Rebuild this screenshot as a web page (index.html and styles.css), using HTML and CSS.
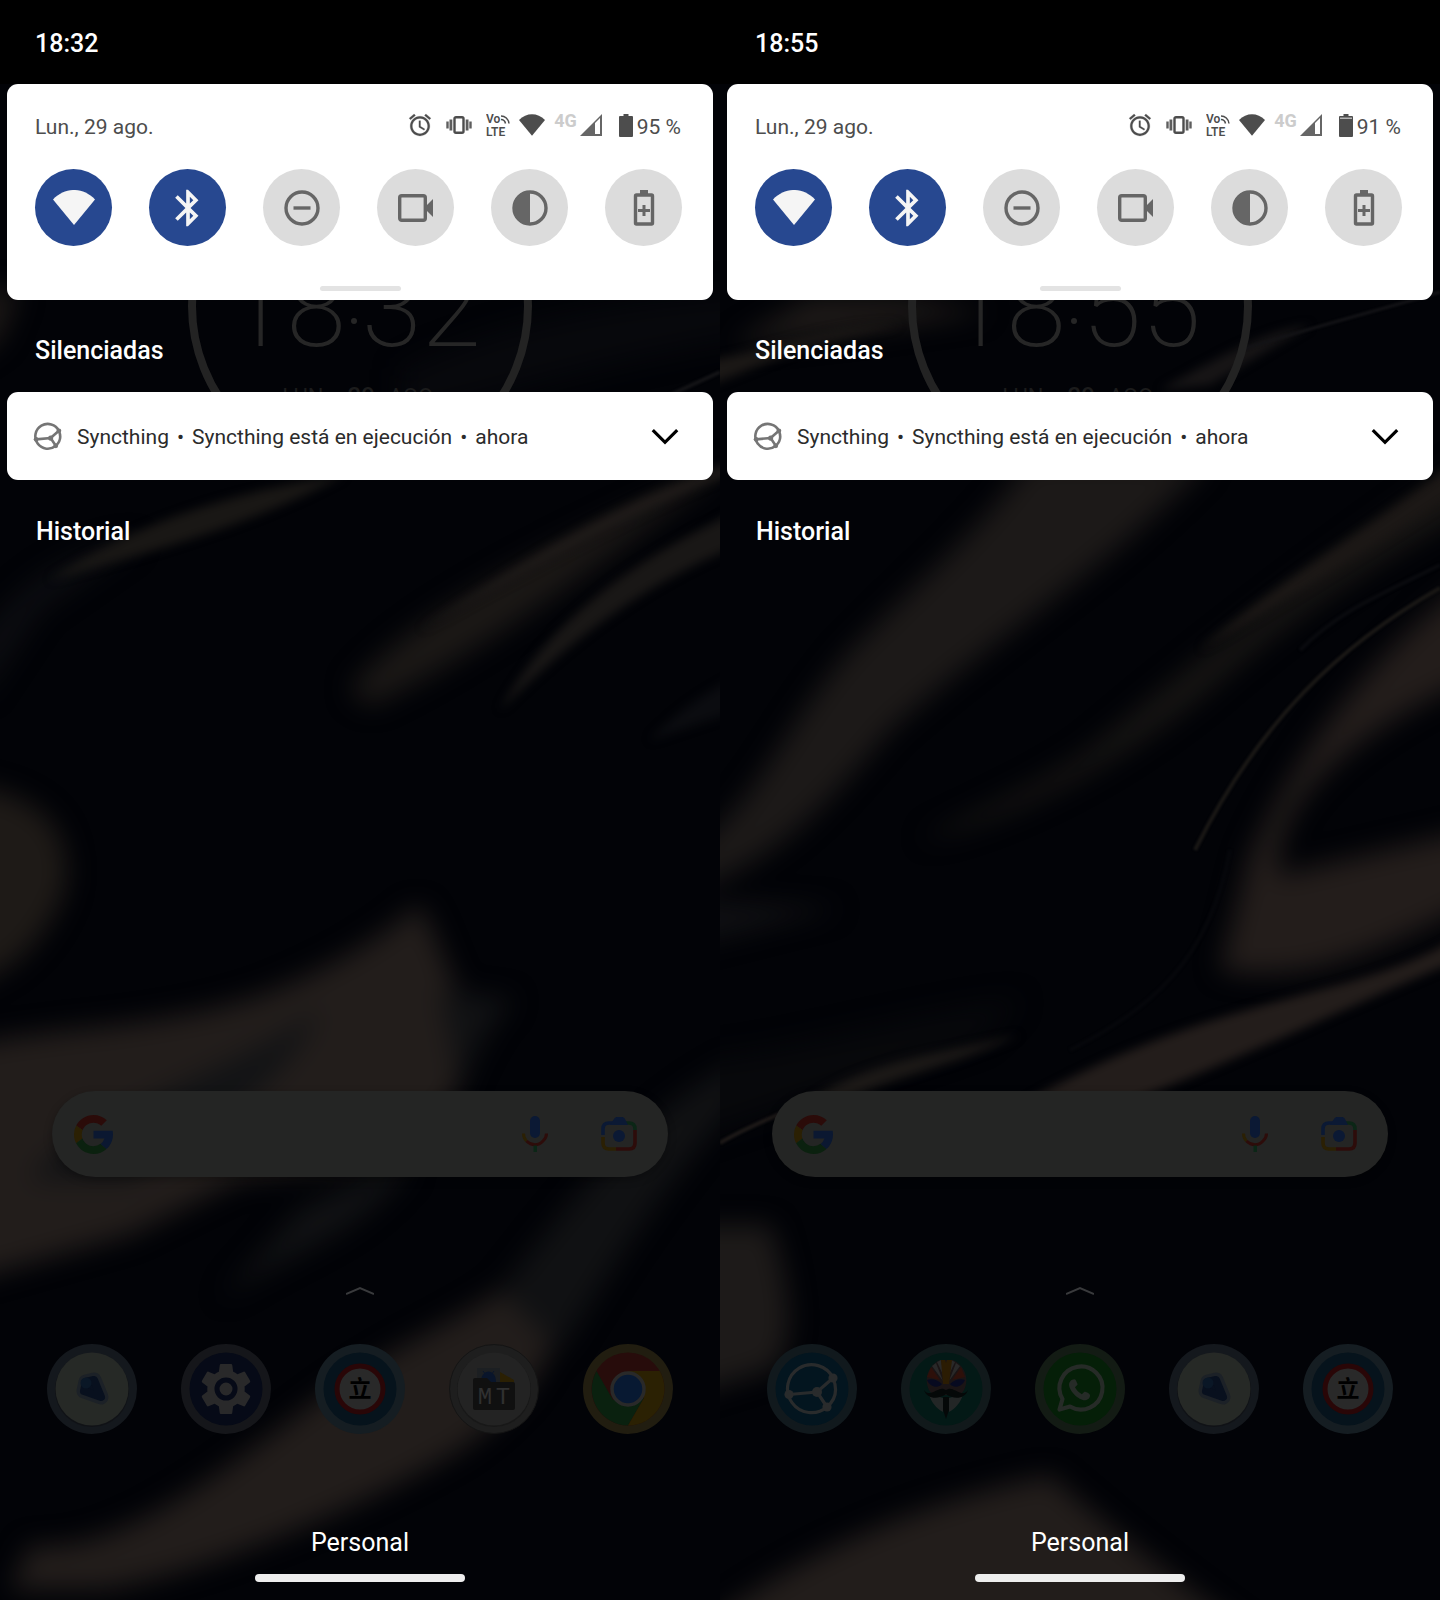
FILE: index.html
```html
<!DOCTYPE html>
<html lang="es">
<head>
<meta charset="utf-8">
<meta name="viewport" content="width=device-width, initial-scale=1">
<title>Notificaciones</title>
<link rel="stylesheet" href="styles.css">
</head>
<body>
<svg class="sprite" aria-hidden="true">
  <defs>
    <symbol id="alarm" viewBox="1 1 22 22"><path stroke="currentColor" stroke-width=".2" d="M22 5.720l-4.600-3.860-1.290 1.530 4.600 3.860L22 5.720zM7.880 3.390L6.600 1.860 2 5.710l1.290 1.530 4.590-3.850zM12.500 8H11v6l4.750 2.850.75-1.230-4-2.370V8zM12 4c-4.970 0-9 4.030-9 9s4.020 9 9 9 9-4.030 9-9-4.030-9-9-9zm0 16c-3.870 0-7-3.130-7-7s3.130-7 7-7 7 3.130 7 7-3.130 7-7 7z"/></symbol>
    <symbol id="vibrate" viewBox="0 0 26 22"><rect x="8.500" y="3.200" width="9" height="15.600" rx="1.500" fill="none" stroke="currentColor" stroke-width="2.400"/><path d="M3.500 5.500h2.800v11H3.500zM19.700 5.500h2.800v11h-2.800zM.3 7.500h2.400v7H.3zM23.300 7.500h2.400v7h-2.400z" opacity=".9"/></symbol>
    <symbol id="volte" viewBox="0 0 24 24"><text x="0" y="10" class="volte-text">Vo</text><text x="0" y="23" class="volte-text">LTE</text><path d="M15 3c4 0 7.500 3 8 7.500M15 6.500c2 0 4 1.500 4.500 4" fill="none" stroke="currentColor" stroke-width="1.500"/></symbol>
    <symbol id="wifi" viewBox="0 0 42 35"><path d="M0 9.500C12-3.200 30-3.200 42 9.500L21 35z"/></symbol>
    <symbol id="signal" viewBox="0 0 22 22"><path fill-rule="evenodd" d="M0 22L22 0v22zM15 9v11h5V4z"/></symbol>
    <symbol id="battery" viewBox="0 0 14 23"><path d="M4.500 0h5v2H13a1 1 0 0 1 1 1v19a1 1 0 0 1-1 1H1a1 1 0 0 1-1-1V3a1 1 0 0 1 1-1h3.500z"/></symbol>
    <symbol id="battery-low" viewBox="0 0 14 23"><path d="M4.500 0h5v2H13a1 1 0 0 1 1 1v19a1 1 0 0 1-1 1H1a1 1 0 0 1-1-1V3a1 1 0 0 1 1-1h3.500z"/><path fill="#b5b5b5" d="M1 3.500h12v1.500H1z"/></symbol>
    <symbol id="bluetooth" viewBox="0 0 24 24"><path d="M17.710 7.710L12 2h-1v7.590L6.410 5 5 6.410 10.590 12 5 17.590 6.410 19 11 14.410V22h1l5.710-5.710-4.300-4.290 4.300-4.290zM13 5.830l1.880 1.880L13 9.590V5.830zm1.880 10.460L13 18.170v-3.760l1.880 1.880z"/></symbol>
    <symbol id="dnd" viewBox="0 0 44 44"><circle cx="22" cy="22" r="16" fill="none" stroke="currentColor" stroke-width="3.400"/><path d="M13.500 20.300h17v3.400h-17z"/></symbol>
    <symbol id="camera" viewBox="0 0 44 44"><rect x="5.700" y="9.700" width="25.600" height="24.600" rx="2" fill="none" stroke="currentColor" stroke-width="3.400"/><path d="M30 22l9-9v18z"/></symbol>
    <symbol id="contrast" viewBox="0 0 44 44"><circle cx="22" cy="22" r="16" fill="none" stroke="currentColor" stroke-width="3.400"/><path d="M22 5v34A17 17 0 0 1 22 5z"/></symbol>
    <symbol id="saver" viewBox="0 0 44 44"><path d="M18 4h8v4h-8z"/><rect x="13.500" y="9" width="17" height="29" rx="1" fill="none" stroke="currentColor" stroke-width="3.400"/><path d="M20.500 19h3v4H28v3h-4.500v4h-3v-4H16v-3h4.500z"/></symbol>
    <symbol id="syncthing" viewBox="17 17 54 56"><g fill="none" stroke="currentColor"><path d="M66 34A24 24 0 1 0 60 63C68 56 71 46 66 34z"/><path d="M22 50.500L50 48l16-14M50 48l10 15"/></g><circle cx="22" cy="50.500" r="4.600"/><circle cx="50" cy="48" r="5"/><circle cx="66" cy="34" r="4.600"/><circle cx="60" cy="63" r="4.600"/></symbol>
    <symbol id="google" viewBox="4 4 40 40">
      <path fill="#2b0b09" d="M6.306 14.691l6.571 4.819C14.655 15.108 18.961 12 24 12c3.059 0 5.842 1.154 7.961 3.039l5.657-5.657C34.046 6.053 29.268 4 24 4 16.318 4 9.656 8.337 6.306 14.691z"/>
      <path fill="#2b2003" d="M6.306 14.691A19.900 19.900 0 0 0 4 24c0 3.220.76 6.260 2.200 9l6.400-5A12 12 0 0 1 12.877 19.510z"/>
      <path fill="#0b210f" d="M24 44c5.166 0 9.860-1.977 13.409-5.192l-6.190-5.238A11.910 11.910 0 0 1 24 36c-5.202 0-9.619-3.317-11.283-7.946l-6.522 5.025C9.505 39.556 16.227 44 24 44z"/>
      <path fill="#0b1831" d="M43.611 20.083H24v8h11.303a12.040 12.040 0 0 1-4.087 5.571l6.190 5.238C36.971 39.205 44 34 44 24c0-1.341-.138-2.650-.389-3.917z"/>
    </symbol>
    <symbol id="mic" viewBox="0 0 26 36"><rect x="8" y="0" width="10" height="22" rx="5" fill="#0b1934"/><path d="M1.500 17.500c0 3 1 5.500 3 7.500" fill="none" stroke="#2b2003" stroke-width="3"/><path d="M4.500 25c5 5 12 5 16.500 0 2.200-2 3.500-4.500 3.500-7.500" fill="none" stroke="#2d0c0a" stroke-width="3"/><path d="M11.500 29.500h3.500V36h-3.500z" fill="#0b2616"/></symbol>
    <symbol id="lens" viewBox="0 0 36 34"><g fill="none" stroke-width="3.600"><path d="M2 18v-6c0-4 2-6 6-6h4" stroke="#0b1934"/><path d="M25 6h3c4 0 6 2 6 6v1" stroke="#0b2616"/><path d="M34 13v13c0 4-2 6-6 6H15" stroke="#2d0c0a"/><path d="M15 32H8c-4 0-6-2-6-6v-6" stroke="#2b2003"/></g><path d="M9 8l4-6c1-1.500 2-2 3-2h5c1 0 2 .5 3 2l3 6z" fill="#0b1934"/><circle cx="18" cy="19" r="6" fill="#0b1934"/></symbol>

    <symbol id="app-blob" viewBox="0 0 90 90"><circle cx="45" cy="45" r="45" fill="#14181d"/><circle cx="45" cy="46" r="37" fill="#101216"/><circle cx="45" cy="45" r="36.500" fill="#262926"/><path d="M39 38L47 36 54 53 37 47z" fill="#1c2127" stroke="#1c2127" stroke-width="15" stroke-linejoin="round"/><path d="M39 38L47 36 54 53 37 47z" fill="#08101e" stroke="#08101e" stroke-width="8" stroke-linejoin="round"/><circle cx="39" cy="39" r="5.500" fill="#0a1726"/></symbol>
    <symbol id="app-settings" viewBox="0 0 90 90"><circle cx="45" cy="45" r="45" fill="#15161a"/><circle cx="45" cy="45" r="36.500" fill="#060a17"/><path fill="#29292a" transform="translate(45 45) scale(2.600) translate(-12 -12)" d="M19.140 12.940c.04-.3.060-.61.060-.94 0-.32-.02-.64-.07-.94l2.030-1.580c.18-.14.230-.41.120-.61l-1.920-3.320c-.12-.22-.37-.29-.59-.22l-2.390.96c-.5-.38-1.030-.7-1.620-.94l-.36-2.540c-.04-.24-.24-.41-.48-.41h-3.840c-.24 0-.43.170-.47.410l-.36 2.540c-.59.240-1.130.570-1.620.940l-2.390-.96c-.22-.08-.47 0-.59.220L2.740 8.870c-.12.210-.08.470.12.610l2.030 1.580c-.05.3-.09.630-.09.940s.02.640.07.940l-2.030 1.580c-.18.140-.23.410-.12.610l1.920 3.320c.12.220.37.290.59.220l2.390-.96c.5.380 1.030.7 1.620.940l.36 2.540c.05.240.24.410.48.410h3.840c.24 0 .44-.17.470-.41l.36-2.540c.59-.24 1.130-.56 1.620-.94l2.390.96c.22.080.47 0 .59-.22l1.920-3.320c.12-.22.070-.47-.12-.61l-2.010-1.580z"/><circle cx="45" cy="45" r="9" fill="#29292a" stroke="#060a17" stroke-width="5"/></symbol>
    <symbol id="app-li" viewBox="0 0 90 90"><circle cx="45" cy="45" r="45" fill="#151d22"/><circle cx="45" cy="45" r="36.500" fill="#06131c"/><circle cx="45" cy="45" r="23" fill="#292929" stroke="#290607" stroke-width="5"/><text x="45" y="53" text-anchor="middle" class="li-text">立</text></symbol>
    <symbol id="app-mt" viewBox="0 0 90 90"><circle cx="45" cy="45" r="44.500" fill="#1e1e1e" stroke="#141414"/><circle cx="45" cy="46" r="37" fill="#181818"/><circle cx="45" cy="45" r="36.500" fill="#232323"/><path fill="#1c1f22" d="M28 24h23v15H28z"/><path fill="#2b2003" d="M51 28l14 8v5H51z"/><path d="M32 38c0-14 15-14 15 0z" fill="#09152b"/><path d="M34 27l3 4M45 27l-3 4" stroke="#09152b"/><path d="M24 36q0-2 2-2h12l4 4h22q2 0 2 2v24q0 2-2 2H26q-2 0-2-2z" fill="#101010"/><text x="36" y="60" text-anchor="middle" class="mt-text">M</text><text x="54" y="60" text-anchor="middle" class="mt-text">T</text></symbol>
    <symbol id="app-chrome" viewBox="0 0 90 90"><circle cx="45" cy="45" r="45" fill="#211d10"/><circle cx="45" cy="45" r="36.500" fill="#270c0b"/><path d="M13.500 27A36.500 36.500 0 0 0 45 81.500L61 54 30 56z" fill="#0a210f"/><path d="M45 27h31.700A36.500 36.500 0 0 1 45 81.500L61 54z" fill="#2b2103"/><circle cx="45" cy="45" r="16" fill="#081932" stroke="#292929" stroke-width="3.500"/></symbol>
    <symbol id="app-syncthing" viewBox="0 0 90 90"><circle cx="45" cy="45" r="45" fill="#11191d"/><circle cx="45" cy="45" r="36.500" fill="#03151f"/><svg x="17" y="17" width="54" height="56" color="#292b2c" fill="#292b2c" stroke-width="3.200"><use href="#syncthing"/></svg></symbol>
    <symbol id="app-mask" viewBox="0 0 90 90"><circle cx="45" cy="45" r="45" fill="#11191b"/><circle cx="45" cy="45" r="36.500" fill="#031916"/>
      <path d="M26 40c-2-10 4-20 13-24h13c9 4 15 14 13 24-1 5-3 9-7 11H33c-4-2-6-6-7-11z" fill="#1a1415"/>
      <path d="M31 22l4-3 7 18zM36 18l4-2 3 17zM59 22l-4-3-7 18zM54 18l-4-2-3 17z" fill="#292929"/>
      <path d="M26 33l4-10 9 13zM64 33l-4-10-9 13z" fill="#2d100a"/>
      <path d="M40 16h4l1 3 1-3h5l-3 24h-6z" fill="#2b1c03"/>
      <path d="M26 36c5-2 11 0 15 4-4 5-12 3-15-4zM64 36c-5-2-11 0-15 4 4 5 12 3 15-4z" fill="#070a20"/>
      <path d="M28 50l14 4v14C35 64 30 58 28 50zM62 50l-14 4v14c7-4 12-10 14-18z" fill="#232626"/>
      <path d="M23 46c5 7 11 0 17-1 3-1 4 1 5 1s2-2 5-1c6 1 12 8 17 1-3 9-14 10-22 4-8 6-19 5-22-4zM42 53h6v13l-3 9-3-9z" fill="#050808"/></symbol>
    <symbol id="app-whatsapp" viewBox="0 0 90 90"><circle cx="45" cy="45" r="45" fill="#131b14"/><circle cx="45" cy="45" r="36.500" fill="#051f08"/><path d="M24.500 65.500l3-10.500A21.500 21.500 0 1 1 35 62.500z" fill="none" stroke="#262b27" stroke-width="4.200" stroke-linejoin="round"/><path transform="translate(33 32) scale(1.050)" d="M6.620 10.790c1.440 2.830 3.760 5.140 6.590 6.590l2.200-2.200c.27-.27.670-.36 1.020-.24 1.120.370 4.570 1.570 4.570 3.570 0 3-3 4.490-5 4.490C10 23 1 14 1 8c0-2 2-5 5-5 1.500 0 2 2 3.070 4.570.11.350.03.740-.25 1.020z" fill="#262b27"/></symbol>

    <filter id="soft" x="-20%" y="-20%" width="140%" height="140%" color-interpolation-filters="sRGB"><feGaussianBlur stdDeviation="13"/></filter>
    <filter id="fine" x="-20%" y="-20%" width="140%" height="140%" color-interpolation-filters="sRGB"><feGaussianBlur stdDeviation="5"/></filter>
    <filter id="line" x="-20%" y="-20%" width="140%" height="140%" color-interpolation-filters="sRGB"><feGaussianBlur stdDeviation="1"/></filter>
  </defs>
</svg>

<main class="screens">
  <section class="phone" aria-label="Captura 18:32">
    <svg class="wallpaper" viewBox="0 0 720 1600" preserveAspectRatio="none" aria-hidden="true">
      <rect width="720" height="1600" fill="#020307"/>
      <g filter="url(#soft)">
        <path fill="#07080c" d="M400 370C500 320 620 300 740 290V340C620 360 520 390 400 420z"/>
        <path fill="#1c1816" d="M-30 290h50l-20 50-30 20z"/>
        <path fill="#1e1a17" d="M-30 785C40 795 75 830 65 890C50 930 20 970-30 985z"/>
        <path fill="#1b1816" d="M350 690C400 620 560 540 740 460C640 530 510 640 370 706z"/>
        <path fill="#0c0d11" d="M-20 640C30 570 80 550 140 540L40 610-20 700z"/>
        <path fill="#221d1b" d="M-30 1045C60 1025 150 1030 260 995C340 965 390 930 418 905C440 930 448 990 480 1020L455 1095 400 1160 240 1180 130 1235-30 1280z"/>
        <path fill="#121315" d="M30 1180C80 1110 220 1080 320 1010C290 1080 210 1130 130 1180z"/>
        <path fill="#111214" d="M460 1090C480 1040 500 1010 515 1000L440 990zM300 1210C360 1180 440 1150 400 1180 350 1240 290 1250 220 1300z"/>
        <path fill="#221d1b" d="M10 1590L30 1545C120 1555 230 1465 310 1405C390 1345 450 1325 500 1290L570 1250C570 1340 540 1395 460 1450C340 1520 180 1580 100 1590z"/>
        <path fill="#101113" d="M500 1290C580 1190 640 1110 740 1060V1100C650 1200 600 1290 560 1350z"/>
      </g>
      <g filter="url(#fine)">
        <path fill="#191715" d="M50 580C120 530 230 490 345 475C260 520 180 545 50 580z"/>
        <path fill="#1f1b19" d="M420 630C540 550 620 500 740 460V470C640 510 550 560 420 630z"/>
        <path fill="#191716" d="M740 510C630 560 550 620 500 710C570 640 650 580 740 545z"/>
        <path fill="#0b0c10" d="M740 675C690 700 670 720 650 740L740 710z"/>
      </g>
      <path filter="url(#line)" d="M670 395L720 372" stroke="#131316" stroke-width="4"/>
    </svg>
    <div class="clock" aria-hidden="true"><div class="clock-time"><span>18</span><i></i><span>32</span></div><div class="clock-date"><span>LUN.,</span><b>29</b><span>AGO.</span></div></div>

    <header class="status-bar"><time>18:32</time></header>
    <div class="panel">
      <div class="panel-head">
        <span>Lun., 29 ago.</span>
        <div class="status">
          <div class="status-left"><svg class="i24"><use href="#alarm"/></svg><svg class="i26"><use href="#vibrate"/></svg><svg class="i24"><use href="#volte"/></svg></div>
          <svg class="i26"><use href="#wifi"/></svg>
          <div class="mobile"><b>4G</b><svg class="i22"><use href="#signal"/></svg></div>
          <div class="charge"><svg class="ibat"><use href="#battery"/></svg><span>95 %</span></div>
        </div>
      </div>
      <div class="tiles">
        <button class="tile on" aria-label="Wi-Fi"><svg class="t-wifi"><use href="#wifi"/></svg></button>
        <button class="tile on" aria-label="Bluetooth"><svg><use href="#bluetooth"/></svg></button>
        <button class="tile" aria-label="No molestar"><svg><use href="#dnd"/></svg></button>
        <button class="tile" aria-label="Grabar pantalla"><svg><use href="#camera"/></svg></button>
        <button class="tile" aria-label="Tema oscuro"><svg><use href="#contrast"/></svg></button>
        <button class="tile" aria-label="Ahorro de batería"><svg><use href="#saver"/></svg></button>
      </div>
      <div class="handle"></div>
    </div>
    <h2 class="silent">Silenciadas</h2>
    <article class="notification">
      <svg class="n-icon"><use href="#syncthing"/></svg>
      <p><span>Syncthing</span><span>•</span><span>Syncthing está en ejecución</span><span>•</span><span>ahora</span></p>
      <button class="expand" aria-label="Expandir"><svg viewBox="0 0 26 16"><path d="M1.500 2L13 13.500 24.500 2"/></svg></button>
    </article>
    <h2 class="history">Historial</h2>

    <div class="home">
      <form class="search">
        <svg class="g-logo"><use href="#google"/></svg>
        <input type="search" aria-label="Buscar">
        <button type="button" aria-label="Búsqueda por voz"><svg class="g-mic"><use href="#mic"/></svg></button>
        <button type="button" aria-label="Google Lens"><svg class="g-lens"><use href="#lens"/></svg></button>
      </form>
      <svg class="caret" viewBox="0 0 28 10" aria-hidden="true"><path d="M0 8L14 2l14 6"/></svg>
      <nav class="dock" aria-label="Aplicaciones">
        <a href="#" aria-label="Mapa"><svg><use href="#app-blob"/></svg></a>
        <a href="#" aria-label="Ajustes"><svg><use href="#app-settings"/></svg></a>
        <a href="#" aria-label="Li"><svg><use href="#app-li"/></svg></a>
        <a href="#" aria-label="MT Manager"><svg><use href="#app-mt"/></svg></a>
        <a href="#" aria-label="Chrome"><svg><use href="#app-chrome"/></svg></a>
      </nav>
      <p class="carrier">Personal</p>
      <div class="nav-pill"></div>
    </div>
  </section>

  <section class="phone" aria-label="Captura 18:55">
    <svg class="wallpaper" viewBox="0 0 720 1600" preserveAspectRatio="none" aria-hidden="true">
      <rect width="720" height="1600" fill="#020307"/>
      <g filter="url(#soft)">
        <path fill="#1e1a18" d="M10 345L90 298H180L270 312 160 328z"/>
        <path fill="#1c1918" d="M310 460H490C400 560 270 640 170 730C110 800 60 860-30 890V850C40 800 60 730 130 650C200 580 260 530 310 460z"/>
        <path fill="#181614" d="M750 460C620 550 500 640 370 750C320 785 260 810 200 840C300 820 420 750 500 680C580 610 660 560 750 510z"/>
        <path fill="#231d1b" d="M750 580C640 660 560 780 528 860L500 970C580 985 650 955 750 905V830L560 875C550 800 640 730 750 680z"/>
        <path fill="#1d1a19" d="M-30 1225H50C70 1280 80 1350 50 1370L-30 1395z"/>
        <path fill="#221d1b" d="M-20 1630C80 1550 210 1500 330 1475C370 1510 440 1570 540 1640z"/>
        <path fill="#101013" d="M-30 900L120 908-30 945z"/>
        <path fill="#07080b" d="M-30 1060C80 1050 200 1010 300 1000L260 1040-30 1140z"/>
      </g>
      <g filter="url(#fine)">
        <path fill="#1b1816" d="M-10 360C50 350 120 320 180 325L90 345-10 385z"/>
        <path fill="#171516" d="M440 390C510 350 550 330 590 325L490 385z"/>
        <path fill="#1c1816" d="M740 460C640 535 560 580 480 650C570 600 650 550 740 490z"/>
        <path fill="#231d1b" d="M740 935C640 1000 500 990 300 1105H400C520 1060 640 1000 740 960z"/>
        <path fill="#1c1917" d="M90 1100C150 1060 210 1055 300 1035 220 1070 160 1080 120 1103z"/>
      </g>
      <g filter="url(#line)" fill="none">
        <path d="M520 350C600 325 660 310 720 292" stroke="#131316" stroke-width="3"/>
        <path d="M720 588C620 645 540 720 475 850" stroke="#191715" stroke-width="4"/>
        <path d="M720 565C660 595 620 610 580 650" stroke="#090a0e" stroke-width="4"/>
        <path d="M510 850C490 960 430 1010 350 1050" stroke="#06070b" stroke-width="4"/>
        <path d="M0 1143C30 1125 60 1115 90 1100" stroke="#1c1817" stroke-width="4"/>
      </g>
    </svg>
    <div class="clock" aria-hidden="true"><div class="clock-time"><span>18</span><i></i><span>55</span></div><div class="clock-date"><span>LUN.,</span><b>29</b><span>AGO.</span></div></div>

    <header class="status-bar"><time>18:55</time></header>
    <div class="panel">
      <div class="panel-head">
        <span>Lun., 29 ago.</span>
        <div class="status">
          <div class="status-left"><svg class="i24"><use href="#alarm"/></svg><svg class="i26"><use href="#vibrate"/></svg><svg class="i24"><use href="#volte"/></svg></div>
          <svg class="i26"><use href="#wifi"/></svg>
          <div class="mobile"><b>4G</b><svg class="i22"><use href="#signal"/></svg></div>
          <div class="charge"><svg class="ibat"><use href="#battery-low"/></svg><span>91 %</span></div>
        </div>
      </div>
      <div class="tiles">
        <button class="tile on" aria-label="Wi-Fi"><svg class="t-wifi"><use href="#wifi"/></svg></button>
        <button class="tile on" aria-label="Bluetooth"><svg><use href="#bluetooth"/></svg></button>
        <button class="tile" aria-label="No molestar"><svg><use href="#dnd"/></svg></button>
        <button class="tile" aria-label="Grabar pantalla"><svg><use href="#camera"/></svg></button>
        <button class="tile" aria-label="Tema oscuro"><svg><use href="#contrast"/></svg></button>
        <button class="tile" aria-label="Ahorro de batería"><svg><use href="#saver"/></svg></button>
      </div>
      <div class="handle"></div>
    </div>
    <h2 class="silent">Silenciadas</h2>
    <article class="notification">
      <svg class="n-icon"><use href="#syncthing"/></svg>
      <p><span>Syncthing</span><span>•</span><span>Syncthing está en ejecución</span><span>•</span><span>ahora</span></p>
      <button class="expand" aria-label="Expandir"><svg viewBox="0 0 26 16"><path d="M1.500 2L13 13.500 24.500 2"/></svg></button>
    </article>
    <h2 class="history">Historial</h2>

    <div class="home">
      <form class="search">
        <svg class="g-logo"><use href="#google"/></svg>
        <input type="search" aria-label="Buscar">
        <button type="button" aria-label="Búsqueda por voz"><svg class="g-mic"><use href="#mic"/></svg></button>
        <button type="button" aria-label="Google Lens"><svg class="g-lens"><use href="#lens"/></svg></button>
      </form>
      <svg class="caret" viewBox="0 0 28 10" aria-hidden="true"><path d="M0 8L14 2l14 6"/></svg>
      <nav class="dock" aria-label="Aplicaciones">
        <a href="#" aria-label="Syncthing"><svg><use href="#app-syncthing"/></svg></a>
        <a href="#" aria-label="Magisk"><svg><use href="#app-mask"/></svg></a>
        <a href="#" aria-label="WhatsApp"><svg><use href="#app-whatsapp"/></svg></a>
        <a href="#" aria-label="Mapa"><svg><use href="#app-blob"/></svg></a>
        <a href="#" aria-label="Li"><svg><use href="#app-li"/></svg></a>
      </nav>
      <p class="carrier">Personal</p>
      <div class="nav-pill"></div>
    </div>
  </section>
</main>
</body>
</html>
```

FILE: styles.css
```css
* { box-sizing: border-box; }
body { margin: 0; background: #000; font-family: Roboto, "Liberation Sans", sans-serif; color: #fff; }
h2, p { margin: 0; }
button { border: 0; padding: 0; background: none; color: inherit; font: inherit; cursor: pointer; }
svg { display: block; fill: currentColor; flex: none; }
.sprite { position: absolute; width: 0; height: 0; }

.screens { display: grid; grid-template-columns: 1fr 1fr; min-height: 100vh; }
.phone { position: relative; display: flex; flex-direction: column; isolation: isolate; overflow: hidden; }

/* Home screen behind the shade */
.wallpaper { position: absolute; inset: 0; z-index: -2; width: 100%; height: 100%; }
.clock {
  position: absolute; z-index: -1; top: 134px; left: 50%; margin-left: -172px;
  width: 344px; height: 344px; border: 8px solid #232323; border-radius: 50%;
  display: flex; flex-direction: column; align-items: center; padding-top: 99px;
  color: #262626;
}
.clock-time { display: flex; align-items: center; gap: 5px; font-size: 108px; line-height: 136px; font-weight: 200; padding-right: 12px; }
.clock-time i { width: 6px; height: 6px; margin-top: 24px; border-radius: 50%; background: #262626; }
.clock-date { display: flex; align-items: baseline; gap: 14px; font-size: 22px; line-height: 38px; color: #1c1c1c; }
.clock-date b { font-size: 24px; font-weight: 500; }

.status-bar { height: 84px; padding: 3px 35px 0; background: #000; display: flex; align-items: center; font-size: 25px; font-weight: 500; }

.panel { margin: 0 7px; padding: 0 28px 9px; background: #fff; border-radius: 11px; color: #4d4d4d; }
.panel-head { height: 85px; padding-right: 4px; display: flex; align-items: center; justify-content: space-between; font-size: 21px; }
.status, .status-left, .mobile, .charge { display: flex; align-items: center; }
.status { gap: 9px; }
.status > svg, .status-left, .mobile { margin-bottom: 3px; }
.status-left { gap: 14px; }
.mobile { gap: 3px; align-items: flex-start; font-size: 18px; line-height: 14px; color: #ccc; }
.mobile svg { color: #666; }
.charge { gap: 4px; margin-left: 8px; }
.i22 { width: 22px; height: 22px; }
.i24 { width: 24px; height: 24px; }
.i26 { width: 26px; height: 22px; }
.ibat { width: 14px; height: 23px; margin-bottom: 3px; }
.volte-text { font: 600 12px Roboto, sans-serif; }

.tiles { display: flex; justify-content: space-between; padding-right: 3px; }
.tile { width: 77px; height: 77px; border-radius: 50%; background: #dcdcdc; color: #666; display: grid; place-items: center; }
.tile.on { background: #274890; color: #f5f5f5; }
.tile svg { width: 44px; height: 44px; }
.tile .t-wifi { width: 42px; height: 35px; }
.handle { width: 81px; height: 5px; margin: 40px auto 0; border-radius: 3px; background: #e3e3e3; }

h2 { display: flex; align-items: center; padding: 0 35px; font-size: 25px; font-weight: 500; }
.silent { height: 92px; padding-top: 8px; }
.history { height: 102px; padding-left: 36px; }

.notification { margin: 0 7px; height: 88px; padding: 0 34px 0 26px; border-radius: 11px; background: #fff; color: #2b2b2b; display: flex; align-items: center; }
.notification p { flex: 1; display: flex; gap: 8px; margin-left: 15px; padding-top: 2px; font-size: 21px; }
.n-icon { width: 29px; height: 29px; color: #757575; stroke-width: 5; }
.expand svg { width: 28px; height: 17px; fill: none; stroke: #000; stroke-width: 3; }

.home { margin-top: auto; padding-bottom: 18px; display: flex; flex-direction: column; }
.search { margin: 0 52px; height: 86px; border-radius: 43px; background: #242524; display: flex; align-items: center; padding: 0 31px 0 22px; box-shadow: 0 3px 8px rgba(0, 0, 0, .3); }
.search input { flex: 1; min-width: 0; height: 40px; border: 0; outline: 0; background: none; color: #777; font: inherit; }
.search button { margin-left: 53px; }
.g-logo { width: 39px; height: 39px; }
.g-mic { width: 26px; height: 36px; }
.g-lens { width: 36px; height: 34px; }
.caret { width: 28px; height: 10px; margin: 109px auto 48px; fill: none; stroke: #393a3c; stroke-width: 2; }
.dock { margin: 0 47px; display: flex; justify-content: space-between; }
.dock svg { width: 90px; height: 90px; }
.li-text { font: 700 23px "Noto Sans CJK SC", sans-serif; fill: #000; }
.mt-text { font: 400 24px "Liberation Mono", monospace; fill: #303030; }
.carrier { margin: 93px 0 15px; text-align: center; font-size: 25px; line-height: 32px; }
.nav-pill { width: 210px; height: 8px; margin: 0 auto; border-radius: 4px; background: #eee; }
```
